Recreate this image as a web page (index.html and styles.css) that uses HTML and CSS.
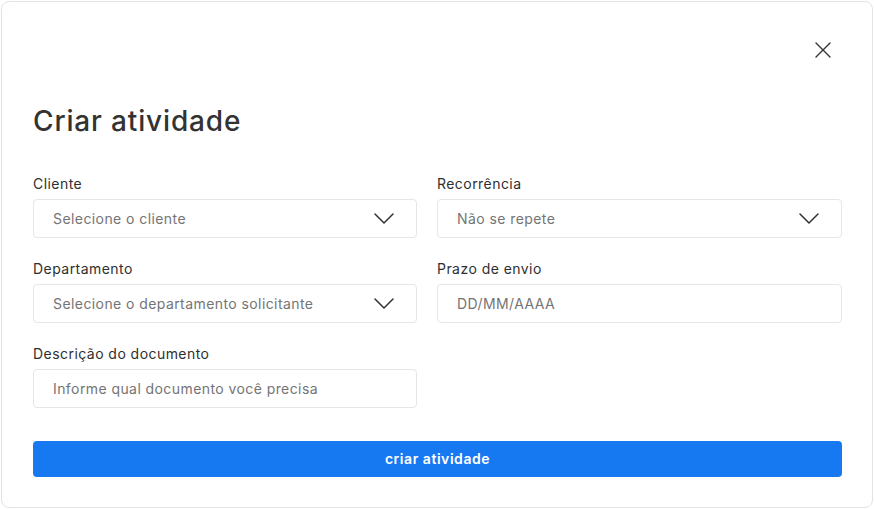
FILE: index.html
```html
<!DOCTYPE html>
<html lang="pt-BR">
<head>
<meta charset="utf-8">
<title>Criar atividade</title>
<link rel="stylesheet" href="styles.css">
</head>
<body>
<div class="modal">
  <button class="close" aria-label="Fechar">
    <svg width="16" height="16" viewBox="0 0 16 16"><path d="M1 1 L15 15 M15 1 L1 15" stroke="#333" stroke-width="1.4" fill="none" stroke-linecap="round"/></svg>
  </button>
  <h1 class="title">Criar atividade</h1>
  <div class="grid">
    <div class="field">
      <label class="label">Cliente</label>
      <div class="input select"><span class="ph">Selecione o cliente</span>
        <svg class="chev" width="20" height="11" viewBox="0 0 20 11"><path d="M1 1 L10 10 L19 1" stroke="#333" stroke-width="1.5" fill="none" stroke-linecap="round" stroke-linejoin="round"/></svg>
      </div>
    </div>
    <div class="field">
      <label class="label">Recorrência</label>
      <div class="input select"><span class="ph">Não se repete</span>
        <svg class="chev" width="20" height="11" viewBox="0 0 20 11"><path d="M1 1 L10 10 L19 1" stroke="#333" stroke-width="1.5" fill="none" stroke-linecap="round" stroke-linejoin="round"/></svg>
      </div>
    </div>
    <div class="field">
      <label class="label">Departamento</label>
      <div class="input select"><span class="ph">Selecione o departamento solicitante</span>
        <svg class="chev" width="20" height="11" viewBox="0 0 20 11"><path d="M1 1 L10 10 L19 1" stroke="#333" stroke-width="1.5" fill="none" stroke-linecap="round" stroke-linejoin="round"/></svg>
      </div>
    </div>
    <div class="field">
      <label class="label">Prazo de envio</label>
      <div class="input"><span class="ph">DD/MM/AAAA</span></div>
    </div>
    <div class="field">
      <label class="label">Descrição do documento</label>
      <div class="input"><span class="ph">Informe qual documento você precisa</span></div>
    </div>
  </div>
  <button class="submit">criar atividade</button>
</div>
</body>
</html>
```
FILE: styles.css
```css
* { box-sizing: border-box; }
html, body { margin: 0; padding: 0; background: #fff; }
body { font-family: "Inter", "Open Sans", sans-serif; color: #333; }
.modal {
  position: relative;
  margin: 1px;
  width: 872px;
  height: 507px;
  border: 1px solid #e3e3e3;
  border-radius: 8px;
  padding: 101px 30px 0 31px;
}
.close {
  position: absolute;
  top: 38px;
  left: 811px;
  width: 20px;
  height: 20px;
  padding: 2px;
  border: 0;
  background: none;
  display: flex;
}
.title {
  margin: 0;
  font-size: 28px;
  line-height: 36px;
  font-weight: 500;
  color: #333;
  letter-spacing: 0.85px;
}
.grid {
  margin-top: 35px;
  display: grid;
  grid-template-columns: 384px 405px;
  column-gap: 20px;
  row-gap: 21px;
}
.field { display: flex; flex-direction: column; }
.label {
  font-size: 14px;
  line-height: 20px;
  margin-bottom: 5px;
  color: #2f2f2f;
  letter-spacing: 0.45px;
}
.input {
  height: 39px;
  border: 1px solid #e6e6e6;
  border-radius: 4px;
  display: flex;
  align-items: center;
  justify-content: space-between;
  padding: 0 22px 0 19px;
}
.ph { font-size: 14px; color: #747474; letter-spacing: 0.42px; }
.chev { display: block; }
.submit {
  margin-top: 33px;
  width: 809px;
  height: 36px;
  padding: 0 0 2px;
  border: 0;
  border-radius: 4px;
  background: #1779f1;
  color: #fff;
  font-family: inherit;
  font-size: 14px;
  font-weight: 600;
  letter-spacing: 0.55px;
}
```
